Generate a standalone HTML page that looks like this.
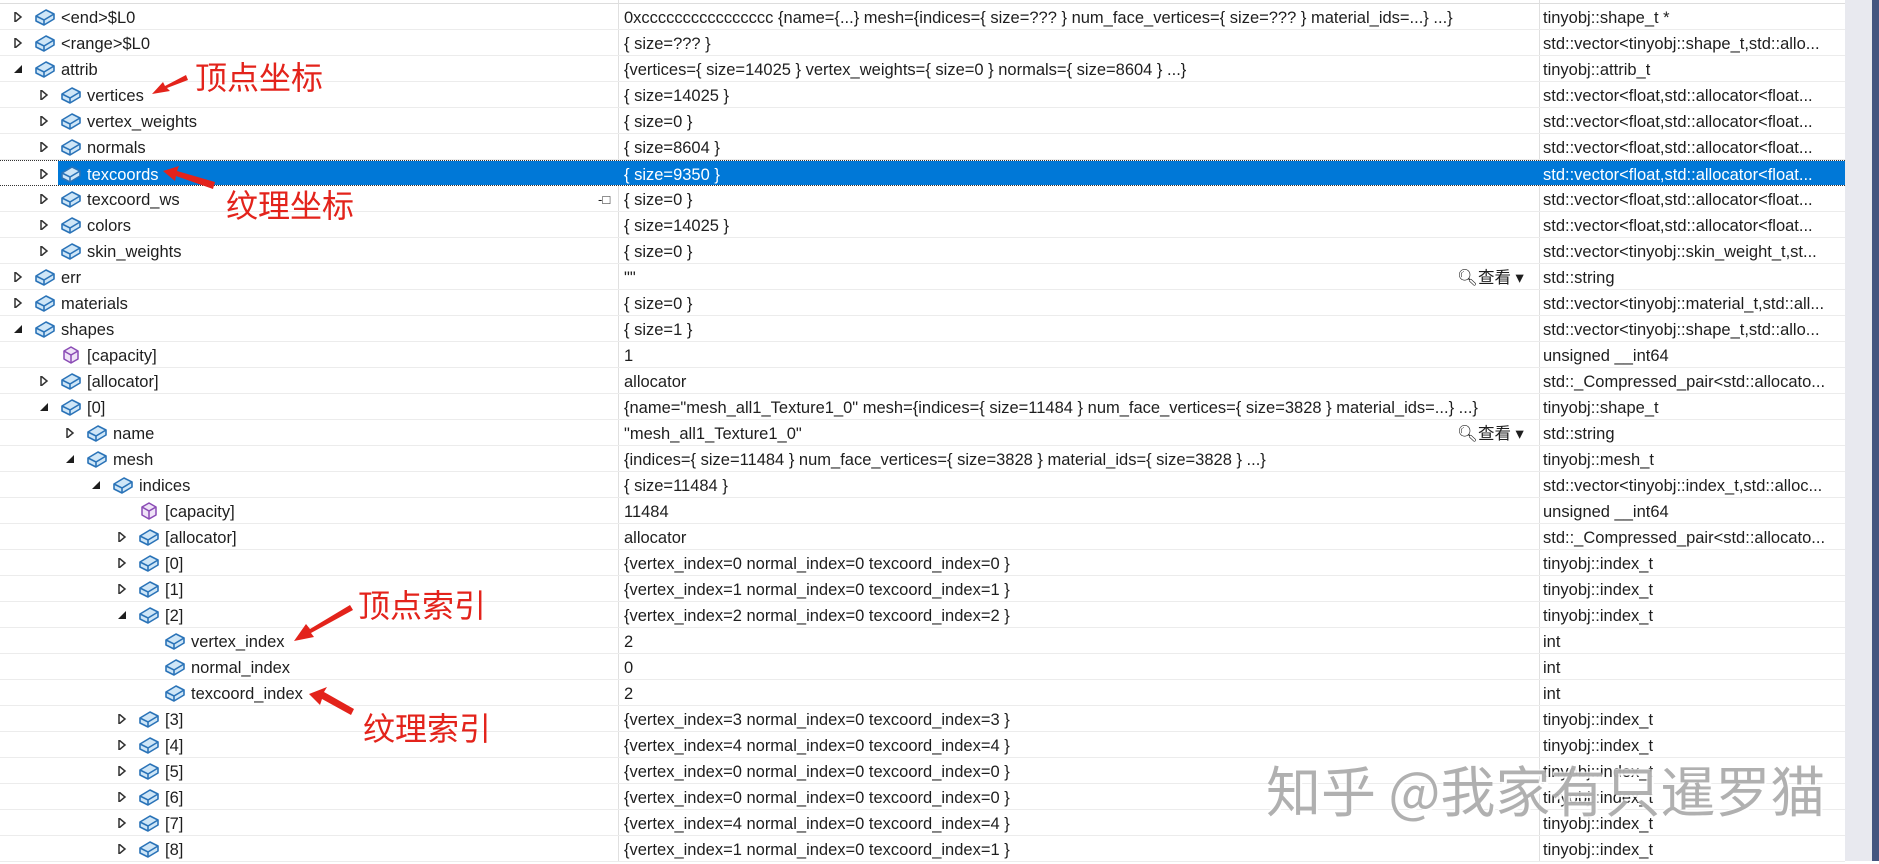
<!DOCTYPE html>
<html><head><meta charset="utf-8"><style>
html,body{margin:0;padding:0;width:1879px;height:861px;overflow:hidden;background:#fff;font-family:"Liberation Sans","Noto Sans CJK SC",sans-serif;color:#1e1e1e}
#wrap{position:absolute;left:0;top:0;width:1879px;height:861px}
.r{position:absolute;left:0;width:1845px;height:26px;border-bottom:1px solid #ececec;box-sizing:border-box;font-size:16.5px;line-height:28px;white-space:nowrap}
.r.sel{color:#fff}
.r.sel .bg{position:absolute;left:58px;right:0;top:0;bottom:0;background:#0078d7}
.n,.v,.t{position:absolute;top:0}
.v{left:624px}
.t{left:1543px;width:300px;overflow:hidden}
.i{position:absolute;top:3px;width:22px;height:20px}
.a{position:absolute;top:8px;width:10px;height:10px}
.vl{position:absolute;top:0;height:861px;width:1px;background:#e0e0e0}
.ann{position:absolute;color:#e3231b;font-size:32px;font-family:"Noto Sans CJK SC",sans-serif;line-height:1}
.wm{position:absolute;left:1266px;top:761px;font-size:55px;font-family:"Noto Sans CJK SC",sans-serif;color:rgba(150,150,150,.75);text-shadow:2px 2px 0 rgba(255,255,255,.9),-1px -1px 0 rgba(255,255,255,.8);line-height:1}
.view{position:absolute;left:1457px;top:0;font-size:16.5px}
</style></head><body><div id="wrap">
<svg width="0" height="0" style="position:absolute">
<defs>
<g id="cb"><path d="M2 9 L12 3 L20 7 L20 12 L10 18 L2 14 Z" fill="#cfe6f7" stroke="#2a73b8" stroke-width="1.6" stroke-linejoin="round"/><path d="M2 9 L10 13 L20 7 M10 13 L10 18" fill="none" stroke="#2a73b8" stroke-width="1.6"/></g>
<g id="cp"><path d="M4 6 L11 2 L18 6 L18 14 L11 18 L4 14 Z" fill="#efe3f7" stroke="#8a4bb5" stroke-width="1.5" stroke-linejoin="round"/><path d="M4 6 L11 10 L18 6 M11 10 L11 18" fill="none" stroke="#8a4bb5" stroke-width="1.5"/></g>
<g id="ac"><path d="M2 0 L8 5 L2 10 Z" fill="none" stroke="#333" stroke-width="1.5"/></g>
<g id="ae"><path d="M9 1 L9 9 L1 9 Z" fill="#1e1e1e"/></g>
</defs></svg>
<div class="vl" style="left:618px"></div>
<div class="vl" style="left:1539px"></div>
<div style="position:absolute;left:1845px;top:0;width:27px;height:861px;background:#e8e9ef"></div>
<div style="position:absolute;left:1872px;top:0;width:7px;height:861px;background:#44557f"></div>
<div style="position:absolute;left:0;top:0;width:1845px;height:4px;border-bottom:1px solid #ddd;box-sizing:border-box"></div>

<div class="r" style="top:4px"><svg class="a" style="left:13px"><use href="#ac"/></svg><svg class="i" style="left:34px"><use href="#cb"/></svg><span class="n" style="left:61px">&lt;end&gt;$L0</span><span class="v">0xcccccccccccccccc {name={...} mesh={indices={ size=??? } num_face_vertices={ size=??? } material_ids=...} ...}</span><span class="t">tinyobj::shape_t *</span></div>
<div class="r" style="top:30px"><svg class="a" style="left:13px"><use href="#ac"/></svg><svg class="i" style="left:34px"><use href="#cb"/></svg><span class="n" style="left:61px">&lt;range&gt;$L0</span><span class="v">{ size=??? }</span><span class="t">std::vector&lt;tinyobj::shape_t,std::allo...</span></div>
<div class="r" style="top:56px"><svg class="a" style="left:13px"><use href="#ae"/></svg><svg class="i" style="left:34px"><use href="#cb"/></svg><span class="n" style="left:61px">attrib</span><span class="v">{vertices={ size=14025 } vertex_weights={ size=0 } normals={ size=8604 } ...}</span><span class="t">tinyobj::attrib_t</span></div>
<div class="r" style="top:82px"><svg class="a" style="left:39px"><use href="#ac"/></svg><svg class="i" style="left:60px"><use href="#cb"/></svg><span class="n" style="left:87px">vertices</span><span class="v">{ size=14025 }</span><span class="t">std::vector&lt;float,std::allocator&lt;float...</span></div>
<div class="r" style="top:108px"><svg class="a" style="left:39px"><use href="#ac"/></svg><svg class="i" style="left:60px"><use href="#cb"/></svg><span class="n" style="left:87px">vertex_weights</span><span class="v">{ size=0 }</span><span class="t">std::vector&lt;float,std::allocator&lt;float...</span></div>
<div class="r" style="top:134px"><svg class="a" style="left:39px"><use href="#ac"/></svg><svg class="i" style="left:60px"><use href="#cb"/></svg><span class="n" style="left:87px">normals</span><span class="v">{ size=8604 }</span><span class="t">std::vector&lt;float,std::allocator&lt;float...</span></div>
<div class="r sel" style="top:160px;border-top:1px dotted #333;border-bottom:1px dotted #333"><div class="bg"></div><svg class="a" style="left:39px"><use href="#ac"/></svg><svg class="i" style="left:60px"><use href="#cb"/></svg><span class="n" style="left:87px">texcoords</span><span class="v">{ size=9350 }</span><span class="t">std::vector&lt;float,std::allocator&lt;float...</span></div>
<div class="r" style="top:186px"><svg class="a" style="left:39px"><use href="#ac"/></svg><svg class="i" style="left:60px"><use href="#cb"/></svg><span class="n" style="left:87px">texcoord_ws</span><span style="position:absolute;left:598px;top:0;font-size:13px">-□</span><span class="v">{ size=0 }</span><span class="t">std::vector&lt;float,std::allocator&lt;float...</span></div>
<div class="r" style="top:212px"><svg class="a" style="left:39px"><use href="#ac"/></svg><svg class="i" style="left:60px"><use href="#cb"/></svg><span class="n" style="left:87px">colors</span><span class="v">{ size=14025 }</span><span class="t">std::vector&lt;float,std::allocator&lt;float...</span></div>
<div class="r" style="top:238px"><svg class="a" style="left:39px"><use href="#ac"/></svg><svg class="i" style="left:60px"><use href="#cb"/></svg><span class="n" style="left:87px">skin_weights</span><span class="v">{ size=0 }</span><span class="t">std::vector&lt;tinyobj::skin_weight_t,st...</span></div>
<div class="r" style="top:264px"><svg class="a" style="left:13px"><use href="#ac"/></svg><svg class="i" style="left:34px"><use href="#cb"/></svg><span class="n" style="left:61px">err</span><span class="v">""</span><span class="view">🔍︎查看 ▾</span><span class="t">std::string</span></div>
<div class="r" style="top:290px"><svg class="a" style="left:13px"><use href="#ac"/></svg><svg class="i" style="left:34px"><use href="#cb"/></svg><span class="n" style="left:61px">materials</span><span class="v">{ size=0 }</span><span class="t">std::vector&lt;tinyobj::material_t,std::all...</span></div>
<div class="r" style="top:316px"><svg class="a" style="left:13px"><use href="#ae"/></svg><svg class="i" style="left:34px"><use href="#cb"/></svg><span class="n" style="left:61px">shapes</span><span class="v">{ size=1 }</span><span class="t">std::vector&lt;tinyobj::shape_t,std::allo...</span></div>
<div class="r" style="top:342px"><svg class="i" style="left:60px"><use href="#cp"/></svg><span class="n" style="left:87px">[capacity]</span><span class="v">1</span><span class="t">unsigned __int64</span></div>
<div class="r" style="top:368px"><svg class="a" style="left:39px"><use href="#ac"/></svg><svg class="i" style="left:60px"><use href="#cb"/></svg><span class="n" style="left:87px">[allocator]</span><span class="v">allocator</span><span class="t">std::_Compressed_pair&lt;std::allocato...</span></div>
<div class="r" style="top:394px"><svg class="a" style="left:39px"><use href="#ae"/></svg><svg class="i" style="left:60px"><use href="#cb"/></svg><span class="n" style="left:87px">[0]</span><span class="v">{name="mesh_all1_Texture1_0" mesh={indices={ size=11484 } num_face_vertices={ size=3828 } material_ids=...} ...}</span><span class="t">tinyobj::shape_t</span></div>
<div class="r" style="top:420px"><svg class="a" style="left:65px"><use href="#ac"/></svg><svg class="i" style="left:86px"><use href="#cb"/></svg><span class="n" style="left:113px">name</span><span class="v">"mesh_all1_Texture1_0"</span><span class="view">🔍︎查看 ▾</span><span class="t">std::string</span></div>
<div class="r" style="top:446px"><svg class="a" style="left:65px"><use href="#ae"/></svg><svg class="i" style="left:86px"><use href="#cb"/></svg><span class="n" style="left:113px">mesh</span><span class="v">{indices={ size=11484 } num_face_vertices={ size=3828 } material_ids={ size=3828 } ...}</span><span class="t">tinyobj::mesh_t</span></div>
<div class="r" style="top:472px"><svg class="a" style="left:91px"><use href="#ae"/></svg><svg class="i" style="left:112px"><use href="#cb"/></svg><span class="n" style="left:139px">indices</span><span class="v">{ size=11484 }</span><span class="t">std::vector&lt;tinyobj::index_t,std::alloc...</span></div>
<div class="r" style="top:498px"><svg class="i" style="left:138px"><use href="#cp"/></svg><span class="n" style="left:165px">[capacity]</span><span class="v">11484</span><span class="t">unsigned __int64</span></div>
<div class="r" style="top:524px"><svg class="a" style="left:117px"><use href="#ac"/></svg><svg class="i" style="left:138px"><use href="#cb"/></svg><span class="n" style="left:165px">[allocator]</span><span class="v">allocator</span><span class="t">std::_Compressed_pair&lt;std::allocato...</span></div>
<div class="r" style="top:550px"><svg class="a" style="left:117px"><use href="#ac"/></svg><svg class="i" style="left:138px"><use href="#cb"/></svg><span class="n" style="left:165px">[0]</span><span class="v">{vertex_index=0 normal_index=0 texcoord_index=0 }</span><span class="t">tinyobj::index_t</span></div>
<div class="r" style="top:576px"><svg class="a" style="left:117px"><use href="#ac"/></svg><svg class="i" style="left:138px"><use href="#cb"/></svg><span class="n" style="left:165px">[1]</span><span class="v">{vertex_index=1 normal_index=0 texcoord_index=1 }</span><span class="t">tinyobj::index_t</span></div>
<div class="r" style="top:602px"><svg class="a" style="left:117px"><use href="#ae"/></svg><svg class="i" style="left:138px"><use href="#cb"/></svg><span class="n" style="left:165px">[2]</span><span class="v">{vertex_index=2 normal_index=0 texcoord_index=2 }</span><span class="t">tinyobj::index_t</span></div>
<div class="r" style="top:628px"><svg class="i" style="left:164px"><use href="#cb"/></svg><span class="n" style="left:191px">vertex_index</span><span class="v">2</span><span class="t">int</span></div>
<div class="r" style="top:654px"><svg class="i" style="left:164px"><use href="#cb"/></svg><span class="n" style="left:191px">normal_index</span><span class="v">0</span><span class="t">int</span></div>
<div class="r" style="top:680px"><svg class="i" style="left:164px"><use href="#cb"/></svg><span class="n" style="left:191px">texcoord_index</span><span class="v">2</span><span class="t">int</span></div>
<div class="r" style="top:706px"><svg class="a" style="left:117px"><use href="#ac"/></svg><svg class="i" style="left:138px"><use href="#cb"/></svg><span class="n" style="left:165px">[3]</span><span class="v">{vertex_index=3 normal_index=0 texcoord_index=3 }</span><span class="t">tinyobj::index_t</span></div>
<div class="r" style="top:732px"><svg class="a" style="left:117px"><use href="#ac"/></svg><svg class="i" style="left:138px"><use href="#cb"/></svg><span class="n" style="left:165px">[4]</span><span class="v">{vertex_index=4 normal_index=0 texcoord_index=4 }</span><span class="t">tinyobj::index_t</span></div>
<div class="r" style="top:758px"><svg class="a" style="left:117px"><use href="#ac"/></svg><svg class="i" style="left:138px"><use href="#cb"/></svg><span class="n" style="left:165px">[5]</span><span class="v">{vertex_index=0 normal_index=0 texcoord_index=0 }</span><span class="t">tinyobj::index_t</span></div>
<div class="r" style="top:784px"><svg class="a" style="left:117px"><use href="#ac"/></svg><svg class="i" style="left:138px"><use href="#cb"/></svg><span class="n" style="left:165px">[6]</span><span class="v">{vertex_index=0 normal_index=0 texcoord_index=0 }</span><span class="t">tinyobj::index_t</span></div>
<div class="r" style="top:810px"><svg class="a" style="left:117px"><use href="#ac"/></svg><svg class="i" style="left:138px"><use href="#cb"/></svg><span class="n" style="left:165px">[7]</span><span class="v">{vertex_index=4 normal_index=0 texcoord_index=4 }</span><span class="t">tinyobj::index_t</span></div>
<div class="r" style="top:836px"><svg class="a" style="left:117px"><use href="#ac"/></svg><svg class="i" style="left:138px"><use href="#cb"/></svg><span class="n" style="left:165px">[8]</span><span class="v">{vertex_index=1 normal_index=0 texcoord_index=1 }</span><span class="t">tinyobj::index_t</span></div>

<div class="ann" style="left:195px;top:60px">顶点坐标</div>
<div class="ann" style="left:226px;top:188px">纹理坐标</div>
<div class="ann" style="left:358px;top:588px">顶点索引</div>
<div class="ann" style="left:363px;top:711px">纹理索引</div>
<svg style="position:absolute;left:0;top:0" width="600" height="861">
<g fill="#e3231b">
<path d="M186 75 L165 86 L163 82 L152 94 L170 91 L167 88 L188 80 Z"/>
<path d="M215 182 L177 171 L179 166 L163 171 L175 181 L176 176 L213 189 Z"/>
<path d="M350 605 L310 629 L306 624 L294 641 L314 637 L311 633 L353 610 Z"/>
<path d="M354 709 L324 692 L327 687 L309 694 L320 705 L322 699 L351 715 Z"/>
</g></svg>
<div class="wm">知乎 @我家有只暹罗猫</div>
</div></body></html>
